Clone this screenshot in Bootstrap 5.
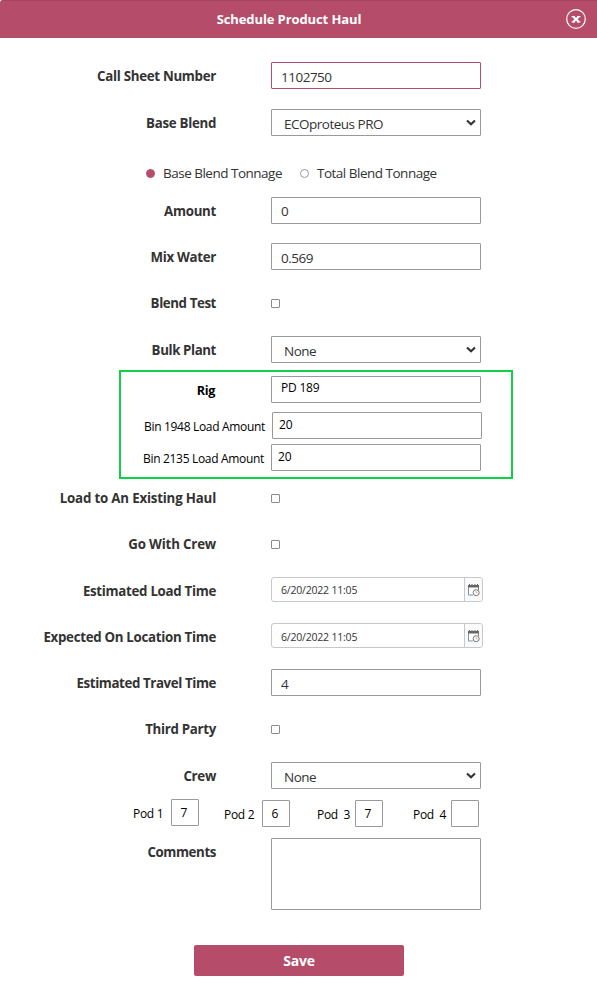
<!DOCTYPE html>
<html lang="en">
<head>
<meta charset="utf-8">
<title>Schedule Product Haul</title>
<link href="https://cdn.jsdelivr.net/npm/bootstrap@5.3.0/dist/css/bootstrap.min.css" rel="stylesheet">
<script src="https://cdn.jsdelivr.net/npm/bootstrap@5.3.0/dist/js/bootstrap.bundle.min.js"></script>
<style>
body { font-family: "Open Sans", "Noto Sans", sans-serif; font-size: 13.5px; letter-spacing: -.5px; color: #333; background: #fff; }
.haul-head { height: 38px; background: #b54c6a; border-top: 1px solid #a64560; border-radius: 3px 0 0; color: #fff; }
.haul-head h1 { font-size: 13px; letter-spacing: -.1px; line-height: 37px; padding-right: 19px; }
.close-btn { right: 11px; top: 8px; width: 20px; height: 20px; }
.haul-form { padding-top: 24px; }
.line { height: 27px; line-height: 29px; margin-bottom: 19px; }
.line-20 { margin-bottom: 20px; }
.lbl { width: 216px; margin-right: 55px; text-align: right; font-weight: 700; font-size: 13.3px; letter-spacing: -.3px; white-space: nowrap; }
.lbl-wide { letter-spacing: -.19px; }
.lbl-tight { letter-spacing: -.4px; }
.form-control, .form-select { width: 210px; height: 27px; border: 1px solid #999; border-radius: 1px; padding: 3px 9px 0 9px; font-size: 13.5px; line-height: 22px; letter-spacing: -.5px; color: #333; background: #fff; }
.form-select { padding-left: 12px; }
.focused { border-color: #b54c6a; }
.arrow { right: 5px; top: 10px; }
.check { width: 9px; height: 9px; border: 1px solid #8c8c8c; border-radius: 1px; margin: 10px 0 0; appearance: none; }
.dot { width: 9px; height: 9px; border: 1px solid #999; border-radius: 50%; appearance: none; margin: 0; }
.dot:checked { background: #b54c6a; border-color: #b54c6a; }
.radios { height: 27px; margin: 24px 0 10px; padding-left: 146px; }
.radio-first { width: 137px; }
.rig-box { width: 394px; height: 109px; margin: -12px 0 5px 119px; border: 2px solid #0fd147; padding-top: 4px; color: #000; }
.rig-box .form-control { color: #000; font-size: 12px; letter-spacing: -.2px; padding-top: 0; padding-bottom: 4px; line-height: 21px; }
.rig-box .lbl { width: 94px; margin-right: 56px; font-size: 12.6px; }
.rig-box .line { margin-bottom: 9px; }
.rig-box .bin-line { margin-bottom: 5px; }
.bin-lbl { font-size: 12px; letter-spacing: -.32px; width: 144px; text-align: right; margin-right: 7px; white-space: nowrap; }
.bin-second { width: 143px; }
.rig-box .bin-input { padding-left: 6px; padding-bottom: 2px; }
.date-group { width: 212px; height: 25px; border: 1px solid #c8c8c8; border-radius: 3px; font-size: 10.5px; letter-spacing: -.2px; line-height: 23px; }
.date-group .form-control { width: 192px; height: 23px; border: 0; background: none; font-size: 10.5px; letter-spacing: -.2px; line-height: 21px; padding: 0 9px; }
.date-group .date-low { padding-top: 2px; }
.date-btn { width: 18px; border-left: 1px solid #c8c8c8; background: #fafafa; border-radius: 0 3px 3px 0; }
.pods { height: 28px; margin: -9px 0 11px; padding-left: 133px; color: #000; font-size: 12px; letter-spacing: -.3px; line-height: 29px; white-space: pre; }
.pods label { width: 38px; }
.pods .form-control { width: 28px; padding: 0 2px 0 0; text-align: center; font-size: 12px; color: #000; letter-spacing: 0; }
.pods .low { margin-top: 1px; }
.p2 { margin-left: 25px; } .p3 { margin-left: 27px; } .p4 { margin-left: 30px; }
textarea.form-control { height: 72px; resize: none; }
.save { width: 210px; height: 31px; margin: 35px 0 0 194px; padding: 0; background: #b54c6a; color: #fff; border: 0; border-radius: 2px; font-size: 14px; font-weight: 700; letter-spacing: -.2px; }
</style>
</head>
<body>
<svg class="d-none">
  <symbol id="chev" viewBox="0 0 10 7"><path d="M1 1.400 5 5.200 9 1.400" fill="none" stroke="#333" stroke-width="2.100"/></symbol>
  <symbol id="cal" viewBox="0 0 13 14">
    <rect x="1" y="3" width="10.500" height="9" fill="#fff"/>
    <path d="M1.500 4v8H6" fill="none" stroke="#7a93ab"/>
    <path d="M11.500 4v3" stroke="#888"/>
    <path d="M1 2h11v2.500H1z" fill="#666"/>
    <path d="M2.500 1v2M5 1v2M8 1v2M10.500 1v2" stroke="#666"/>
    <circle cx="9.200" cy="9.700" r="3" fill="#fff" stroke="#777"/>
    <path d="M9.200 8.200v1.700h1.300" fill="none" stroke="#c09a80" stroke-width=".8"/>
  </symbol>
</svg>
<header class="haul-head position-relative text-center">
  <h1 class="fw-bold m-0">Schedule Product Haul</h1>
  <svg class="close-btn position-absolute" viewBox="0 0 20 20"><circle cx="10" cy="10" r="9.300" fill="none" stroke="#fff" stroke-width="1.200"/><path d="M7 7.500 13 13M13 7.500 7 13" stroke="#fff" stroke-width="2.200"/><path d="M5.500 7.500h3.500M11 7.500h3.500M5.500 13h3.500M11 13h3.500" stroke="#fff"/></svg>
</header>
<form class="haul-form">
  <div class="line line-20 d-flex"><label class="lbl">Call Sheet Number</label><input class="form-control focused" value="1102750"></div>
  <div class="line mb-0 d-flex"><label class="lbl">Base Blend</label><div class="position-relative"><select class="form-select"><option>ECOproteus PRO</option></select><svg class="arrow position-absolute" width="10" height="7"><use href="#chev"/></svg></div></div>
  <div class="radios d-flex align-items-center">
    <input type="radio" class="dot" name="ton" checked><label class="ms-2 radio-first">Base Blend Tonnage</label>
    <input type="radio" class="dot" name="ton"><label class="ms-2">Total Blend Tonnage</label>
  </div>
  <div class="line d-flex"><label class="lbl">Amount</label><input class="form-control pt-0" value="0"></div>
  <div class="line d-flex"><label class="lbl">Mix Water</label><input class="form-control" value="0.569"></div>
  <div class="line line-20 d-flex"><label class="lbl lbl-tight">Blend Test</label><input type="checkbox" class="check"></div>
  <div class="line d-flex"><label class="lbl lbl-tight">Bulk Plant</label><div class="position-relative"><select class="form-select"><option>None</option></select><svg class="arrow position-absolute" width="10" height="7"><use href="#chev"/></svg></div></div>
  <div class="rig-box">
    <div class="line d-flex"><label class="lbl">Rig</label><input class="form-control" value="PD 189"></div>
    <div class="line bin-line d-flex"><label class="bin-lbl">Bin 1948 Load Amount</label><input class="form-control bin-input" value="20"></div>
    <div class="line bin-line d-flex"><label class="bin-lbl bin-second">Bin 2135 Load Amount</label><input class="form-control bin-input" value="20"></div>
  </div>
  <div class="line d-flex"><label class="lbl lbl-wide">Load to An Existing Haul</label><input type="checkbox" class="check"></div>
  <div class="line line-20 d-flex"><label class="lbl lbl-wide">Go With Crew</label><input type="checkbox" class="check"></div>
  <div class="line d-flex"><label class="lbl">Estimated Load Time</label><div class="date-group d-flex"><input class="form-control" value="6/20/2022 11:05"><span class="date-btn d-flex justify-content-center align-items-center"><svg width="13" height="14"><use href="#cal"/></svg></span></div></div>
  <div class="line d-flex"><label class="lbl">Expected On Location Time</label><div class="date-group d-flex"><input class="form-control date-low" value="6/20/2022 11:05"><span class="date-btn d-flex justify-content-center align-items-center"><svg width="13" height="14"><use href="#cal"/></svg></span></div></div>
  <div class="line d-flex"><label class="lbl lbl-tight">Estimated Travel Time</label><input class="form-control" value="4"></div>
  <div class="line line-20 d-flex"><label class="lbl">Third Party</label><input type="checkbox" class="check"></div>
  <div class="line d-flex"><label class="lbl">Crew</label><div class="position-relative"><select class="form-select"><option>None</option></select><svg class="arrow position-absolute" width="10" height="7"><use href="#chev"/></svg></div></div>
  <div class="pods d-flex"><label>Pod 1</label><input class="form-control" value="7"><label class="p2 low">Pod 2</label><input class="form-control low" value="6"><label class="p3 low">Pod  3</label><input class="form-control low" value="7"><label class="p4 low">Pod  4</label><input class="form-control low"></div>
  <div class="d-flex"><label class="lbl lbl-tight line mb-0">Comments</label><textarea class="form-control"></textarea></div>
  <button type="button" class="save btn d-block">Save</button>
</form>
</body>
</html>
